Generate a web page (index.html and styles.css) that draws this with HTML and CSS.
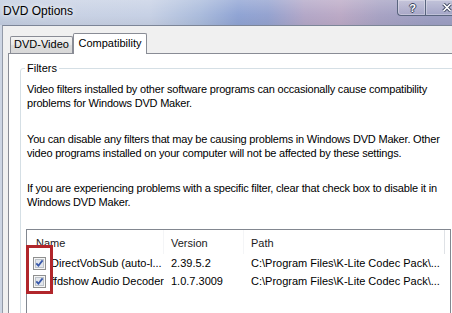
FILE: index.html
```html
<!DOCTYPE html>
<html>
<head>
<meta charset="utf-8">
<title>DVD Options</title>
<link rel="stylesheet" href="styles.css">
</head>
<body>
<div class="window">
  <div class="titlebar">
    <span class="title">DVD Options</span>
    <div class="caption">
      <div class="cbtn help">?</div>
      <div class="cbtn close">
        <svg width="10" height="9" viewBox="0 0 10 9">
          <path d="M1.5 1 L8.5 8 M8.5 1 L1.5 8" stroke="#3a445e" stroke-width="3.4" fill="none"/>
          <path d="M1.5 1 L8.5 8 M8.5 1 L1.5 8" stroke="#ffffff" stroke-width="1.7" fill="none"/>
        </svg>
      </div>
    </div>
  </div>
  <div class="main">
    <div class="frame-left"></div>
    <div class="client">
      <div class="tabs">
        <div class="tab">DVD-Video</div>
        <div class="tab active">Compatibility</div>
      </div>
      <div class="panel">
        <fieldset class="group">
          <legend>Filters</legend>
          <p>Video filters installed by other software programs can occasionally cause compatibility<br>problems for Windows DVD Maker.</p>
          <p>You can disable any filters that may be causing problems in Windows DVD Maker. Other<br>video programs installed on your computer will not be affected by these settings.</p>
          <p class="last">If you are experiencing problems with a specific filter, clear that check box to disable it in<br>Windows DVD Maker.</p>
          <div class="listview">
            <div class="lv-header">
              <div class="col c-name">Name</div>
              <div class="col c-ver">Version</div>
              <div class="col c-path">Path</div>
              <div class="col c-fill"></div>
            </div>
            <div class="lv-row">
              <div class="cell c-name">
                <svg class="chk" width="13" height="13" viewBox="0 0 13 13">
                  <rect x="0.5" y="0.5" width="12" height="12" fill="#f6f6f6" stroke="#8e8f8f"/>
                  <rect x="2.5" y="2.5" width="8" height="8" fill="#e2e6ec" stroke="#bcc2c9"/>
                  <path d="M3.3 6.4 L5.4 8.7 L9.6 3.4" fill="none" stroke="#3858aa" stroke-width="1.8"/>
                </svg>
                <span>DirectVobSub (auto-l...</span>
              </div>
              <div class="cell c-ver">2.39.5.2</div>
              <div class="cell c-path">C:\Program Files\K-Lite Codec Pack\...</div>
            </div>
            <div class="lv-row">
              <div class="cell c-name">
                <svg class="chk" width="13" height="13" viewBox="0 0 13 13">
                  <rect x="0.5" y="0.5" width="12" height="12" fill="#f6f6f6" stroke="#8e8f8f"/>
                  <rect x="2.5" y="2.5" width="8" height="8" fill="#e2e6ec" stroke="#bcc2c9"/>
                  <path d="M3.3 6.4 L5.4 8.7 L9.6 3.4" fill="none" stroke="#3858aa" stroke-width="1.8"/>
                </svg>
                <span>ffdshow Audio Decoder</span>
              </div>
              <div class="cell c-ver">1.0.7.3009</div>
              <div class="cell c-path">C:\Program Files\K-Lite Codec Pack\...</div>
            </div>
            <div class="annot"></div>
          </div>
        </fieldset>
      </div>
    </div>
  </div>
</div>
</body>
</html>
```

FILE: styles.css
```css
html, body {
  margin: 0;
  padding: 0;
}

body {
  width: 452px;
  height: 313px;
  overflow: hidden;
  background: #f0f0f0;
  font-family: "Liberation Sans", Arial, sans-serif;
  font-size: 11px;
  color: #000;
}

.window {
  width: 452px;
  height: 313px;
  overflow: hidden;
  display: flex;
  flex-direction: column;
}

.titlebar {
  width: 470px;
  height: 25px;
  flex: none;
  display: flex;
  justify-content: space-between;
  align-items: flex-start;
  background:
    linear-gradient(180deg, rgba(255,255,255,0.20), rgba(255,255,255,0) 60%, rgba(0,0,0,0.04)),
    linear-gradient(90deg, #c2cde0 0px, #c9d2e4 60px, #c7d1e5 150px, #abbcdc 200px, #90a4d4 238px, #95a3d0 268px, #b4a8c8 305px, #bcaac6 340px, #a8a3c4 380px, #9d9fc3 430px, #9d9fc3 470px);
}

.title {
  padding: 4px 0 0 3px;
  font-size: 12px;
  line-height: 14px;
  color: #000;
  text-shadow: 0 0 5px rgba(255,255,255,0.9), 0 0 9px rgba(255,255,255,0.7);
}

.caption {
  display: flex;
  margin-right: 2px;
}

.cbtn {
  box-sizing: border-box;
  height: 16px;
  border: 1px solid #59647e;
  border-top: none;
  display: flex;
  align-items: center;
  justify-content: center;
  background: linear-gradient(180deg, rgba(255,255,255,0.22), rgba(255,255,255,0.06));
  box-shadow: inset 0 0 0 1px rgba(255,255,255,0.30);
}

.help {
  width: 28px;
  border-right: none;
  border-bottom-left-radius: 4px;
  padding-left: 2px;
  color: #fff;
  font-weight: bold;
  font-size: 11px;
  line-height: 14px;
  text-shadow: -1px 0 #3a445e, 1px 0 #3a445e, 0 -1px #3a445e, 0 1px #3a445e;
}

.close {
  width: 43px;
  border-bottom-right-radius: 4px;
}

.main {
  flex: 1;
  display: flex;
  min-height: 0;
  width: 470px;
  overflow: hidden;
}

.frame-left {
  width: 2px;
  flex: none;
  background: #cdd5e3;
}

.client {
  flex: 1;
  display: flex;
  flex-direction: column;
  min-height: 0;
  border-top: 1px solid #7c8597;
  border-left: 1px solid #939aa8;
  background: #f0f0f0;
  padding: 7px 0 0 5px;
}

.tabs {
  display: flex;
  align-items: flex-end;
  padding-left: 2px;
  margin-bottom: -1px;
  position: relative;
  z-index: 1;
}

.tab {
  box-sizing: border-box;
  width: 63px;
  height: 17px;
  margin-bottom: 1px;
  border: 1px solid #898c95;
  border-bottom: none;
  border-radius: 2px 2px 0 0;
  background: linear-gradient(180deg, #f4f4f4, #e7e7e7 50%, #dcdcdc 51%, #d8d8d8);
  text-align: center;
  line-height: 15px;
  color: #000;
}

.tab.active {
  width: 74px;
  height: 21px;
  margin-bottom: 0;
  background: #fff;
  line-height: 18px;
}

.panel {
  flex: 1;
  min-height: 0;
  overflow: hidden;
  background: #fff;
  border: 1px solid #898c95;
  border-bottom: none;
  padding: 7px 0 0 11px;
}

.group {
  margin: 0;
  height: 320px;
  border: 1px solid #d5dfe5;
  border-radius: 3px;
  padding: 7px 6px 0 6px;
  min-inline-size: 0;
}

.group legend {
  padding: 0 2px;
  margin-left: -2px;
  line-height: 14px;
}

.group p {
  margin: 0 0 21.5px;
  line-height: 14px;
  letter-spacing: -0.2px;
  white-space: nowrap;
}

.group p.last {
  margin-bottom: 20px;
}

.listview {
  position: relative;
  box-sizing: border-box;
  margin-left: -1px;
  width: 425px;
  height: 130px;
  border: 1px solid #828790;
  background: #fff;
}

.lv-header {
  display: flex;
  height: 24px;
}

.col {
  box-sizing: border-box;
  height: 24px;
  padding-top: 2px;
  line-height: 22px;
  border-right: 1px solid #f4f5f7;
  color: #1a1a1a;
  background: #fff;
}

.c-name { width: 137px; padding-left: 9px; }
.c-ver { width: 80px; padding-left: 7px; }
.c-path { width: 201px; padding-left: 7px; border-right-color: #dfe2e6; }
.c-fill { flex: 1; border-right: none; }

.lv-row {
  display: flex;
  height: 18px;
}

.cell {
  box-sizing: border-box;
  line-height: 18px;
  white-space: nowrap;
  overflow: hidden;
}

.cell.c-name {
  display: flex;
  align-items: flex-start;
  padding-left: 6px;
}

.chk {
  flex: none;
  margin-top: 3px;
  margin-right: 5px;
}

.annot {
  position: absolute;
  left: -1px;
  top: 15px;
  box-sizing: border-box;
  width: 27px;
  height: 49px;
  border: 3px solid #b1262b;
}
```
